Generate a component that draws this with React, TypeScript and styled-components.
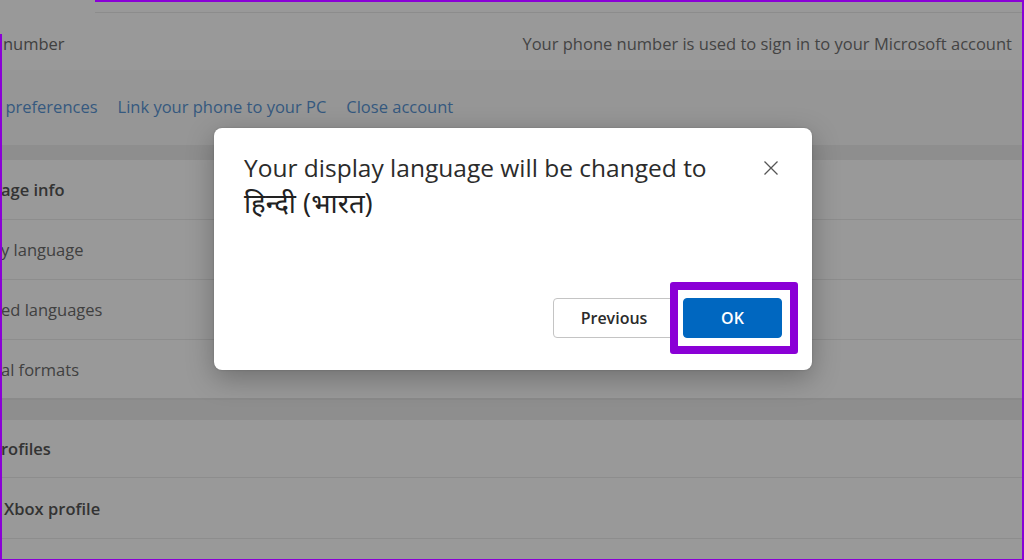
import React from "react";
import styled, { createGlobalStyle } from "styled-components";

const Global = createGlobalStyle`
  html, body { margin: 0; padding: 0; width: 1024px; height: 560px; overflow: hidden; }
  body { font-family: "Open Sans", "Noto Sans", "DejaVu Sans", sans-serif; background: #939393; }
  #root { width: 1024px; height: 560px; }
`;

const Page = styled.div`
  position: relative;
  width: 1024px;
  height: 560px;
  overflow: hidden;
  background: #909090;
`;

const Content = styled.div`
  display: flex;
  flex-direction: column;
  width: 100%;
`;

const TopStrip = styled.div`
  height: 13px;
  display: flex;
  background: #999999;
`;

const TopLine = styled.div`
  flex: 1;
  margin-left: 95px;
  border-bottom: 1px solid #8c8c8c;
`;

const Row = styled.div<{ $h: number; $bg?: string; $border?: boolean; $shift?: number }>`
  height: ${(p) => p.$h}px;
  box-sizing: border-box;
  display: flex;
  align-items: center;
  justify-content: space-between;
  padding-right: 12px;
  padding-top: ${(p) => Math.max(0, p.$shift || 0)}px;
  padding-bottom: ${(p) => Math.max(0, -(p.$shift || 0))}px;
  background: ${(p) => p.$bg || "#999999"};
  border-bottom: ${(p) => (p.$border ? "1px solid #8d8d8d" : "none")};
`;

const Label = styled.span<{ $bold?: boolean; $indent?: number }>`
  font-size: 16.5px;
  font-weight: ${(p) => (p.$bold ? 600 : 400)};
  color: ${(p) => (p.$bold ? "#333333" : "#404040")};
  margin-left: ${(p) => p.$indent || 0}px;
  white-space: nowrap;
`;

const Desc = styled.span`
  font-size: 16.5px;
  color: #444444;
  white-space: nowrap;
`;

const Links = styled.div`
  display: flex;
  gap: 20px;
  margin-left: -8px;
`;

const LinkText = styled.span`
  font-size: 16.5px;
  color: #35597f;
  white-space: nowrap;
`;

const Gap = styled.div<{ $h: number }>`
  height: ${(p) => p.$h}px;
  background: #8e8e8e;
`;

const Card = styled.div`
  display: flex;
  flex-direction: column;
  background: #999999;
  border-bottom: 2px solid #8a8a8a;
`;

const Dialog = styled.div`
  position: absolute;
  left: 214px;
  top: 128px;
  width: 598px;
  height: 242px;
  box-sizing: border-box;
  background: #ffffff;
  border-radius: 8px;
  box-shadow: 0 8px 28px rgba(0, 0, 0, 0.28), 0 0 2px rgba(0, 0, 0, 0.2);
  display: flex;
  flex-direction: column;
  justify-content: space-between;
  padding: 22px 30px 32px 30px;
`;

const Header = styled.div`
  display: flex;
  justify-content: space-between;
  align-items: flex-start;
`;

const Title = styled.h2`
  margin: 0;
  font-size: 24.5px;
  line-height: 35px;
  font-weight: 400;
  color: #2b2b2b;
  width: 490px;
`;

const LangName = styled.span`
  font-size: 27.5px;
  color: #222222;
`;

const CloseButton = styled.button`
  border: none;
  background: transparent;
  padding: 0;
  margin: 10px 3px 0 0;
  width: 16px;
  height: 16px;
  display: flex;
  align-items: center;
  justify-content: center;
`;

const Footer = styled.div`
  display: flex;
  justify-content: flex-end;
  gap: 8px;
`;

const Button = styled.button<{ $primary?: boolean; $w: number }>`
  width: ${(p) => p.$w}px;
  height: 40px;
  box-sizing: border-box;
  border-radius: 4px;
  font-family: inherit;
  font-size: 16px;
  font-weight: 600;
  border: 1px solid ${(p) => (p.$primary ? "#0067c0" : "#c4c4c4")};
  background: ${(p) => (p.$primary ? "#0067c0" : "#ffffff")};
  color: ${(p) => (p.$primary ? "#ffffff" : "#2b2b2b")};
`;

const Highlight = styled.div`
  position: absolute;
  left: 670px;
  top: 282px;
  width: 128px;
  height: 72px;
  box-sizing: border-box;
  border: 8px solid #8a00d6;
  border-radius: 3px;
`;

const FrameLine = styled.div<{ $side: "top" | "left" | "right" | "bottom" }>`
  position: absolute;
  background: #8a00d6;
  ${(p) =>
    p.$side === "top"
      ? "left: 95px; right: 0; top: 0; height: 2px;"
      : p.$side === "left"
      ? "left: 0; top: 34px; bottom: 0; width: 2px;"
      : p.$side === "right"
      ? "right: 0; top: 0; bottom: 0; width: 2px;"
      : "left: 0; right: 0; bottom: 0; height: 1px;"}
`;

export default function App() {
  return (
    <>
      <Global />
      <Page>
        <Content>
          <TopStrip>
            <TopLine />
          </TopStrip>
          <Row $h={57} $shift={4}>
            <Label $indent={3}>number</Label>
            <Desc>Your phone number is used to sign in to your Microsoft account</Desc>
          </Row>
          <Row $h={75} $bg="#969696" $shift={-2}>
            <Links>
              <LinkText>a preferences</LinkText>
              <LinkText>Link your phone to your PC</LinkText>
              <LinkText>Close account</LinkText>
            </Links>
          </Row>
          <Gap $h={15} />
          <Card>
            <Row $h={60} $border>
              <Label $bold $indent={1}>age info</Label>
            </Row>
            <Row $h={60} $border>
              <Label $indent={1}>y language</Label>
            </Row>
            <Row $h={60} $border>
              <Label $indent={1}>ed languages</Label>
            </Row>
            <Row $h={58}>
              <Label $indent={1}>al formats</Label>
            </Row>
          </Card>
          <Gap $h={20} />
          <Card>
            <Row $h={58} $border>
              <Label $bold $indent={1}>rofiles</Label>
            </Row>
            <Row $h={61} $border>
              <Label $bold $indent={4}>Xbox profile</Label>
            </Row>
            <Row $h={40} />
          </Card>
        </Content>

        <Dialog role="dialog">
          <Header>
            <Title>
              Your display language will be changed to <LangName>हिन्दी (भारत)</LangName>
            </Title>
            <CloseButton aria-label="Close">
              <svg width="16" height="16" viewBox="0 0 16 16">
                <path d="M1.5 1.5 L14.5 14.5 M14.5 1.5 L1.5 14.5" stroke="#555" strokeWidth="1.3" fill="none" />
              </svg>
            </CloseButton>
          </Header>
          <Footer>
            <Button $w={122}>Previous</Button>
            <Button $w={99} $primary>OK</Button>
          </Footer>
        </Dialog>

        <Highlight />
        <FrameLine $side="top" />
        <FrameLine $side="left" />
        <FrameLine $side="right" />
        <FrameLine $side="bottom" />
      </Page>
    </>
  );
}
